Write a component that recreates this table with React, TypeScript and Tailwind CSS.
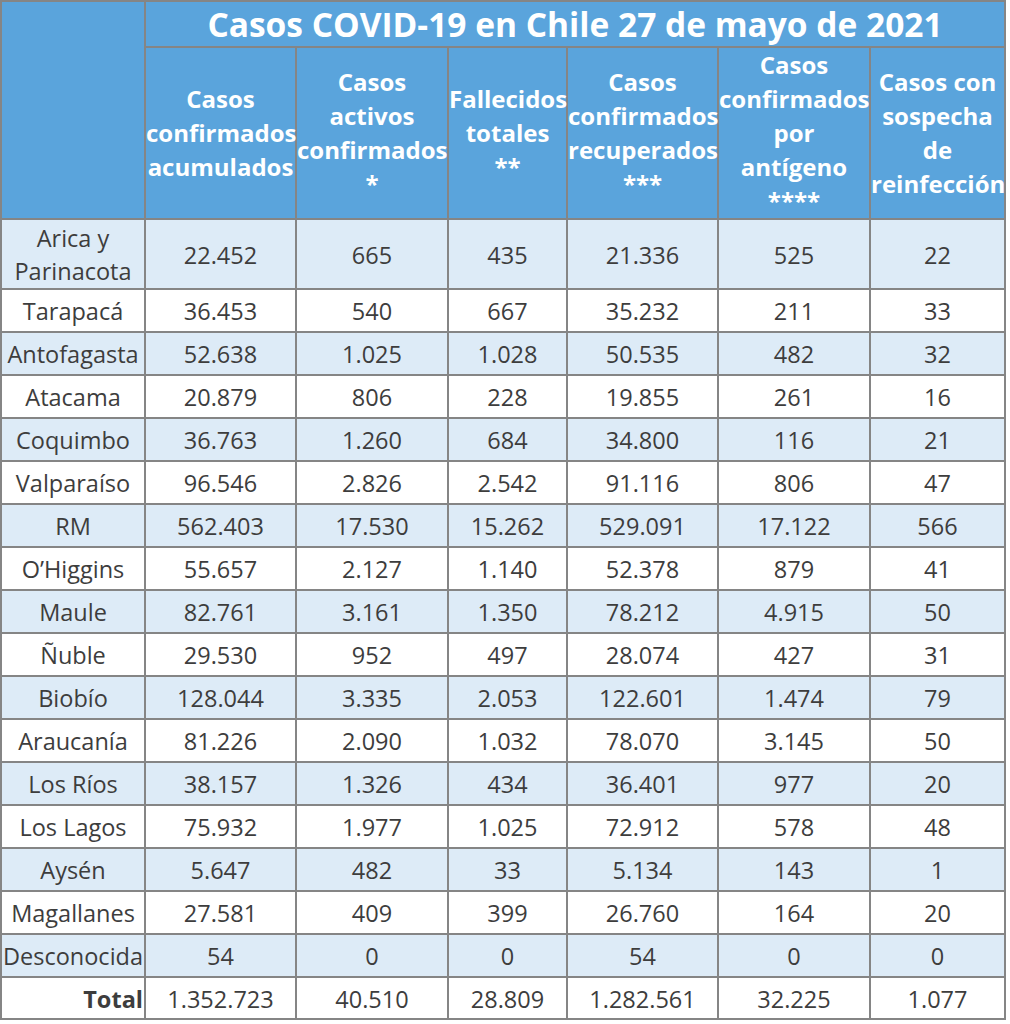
import React from "react";

const headers = [
  ["Casos", "confirmados", "acumulados"],
  ["Casos", "activos", "confirmados", "*"],
  ["Fallecidos", "totales", "**"],
  ["Casos", "confirmados", "recuperados", "***"],
  ["Casos", "confirmados", "por", "antígeno", "****"],
  ["Casos con", "sospecha", "de", "reinfección"],
];

const colWidths = ["w-[144px]", "w-[151px]", "w-[152px]", "w-[119px]", "w-[151px]", "w-[152px]", "w-[135px]"];

const rows: string[][] = [
  ["Arica y\nParinacota", "22.452", "665", "435", "21.336", "525", "22"],
  ["Tarapacá", "36.453", "540", "667", "35.232", "211", "33"],
  ["Antofagasta", "52.638", "1.025", "1.028", "50.535", "482", "32"],
  ["Atacama", "20.879", "806", "228", "19.855", "261", "16"],
  ["Coquimbo", "36.763", "1.260", "684", "34.800", "116", "21"],
  ["Valparaíso", "96.546", "2.826", "2.542", "91.116", "806", "47"],
  ["RM", "562.403", "17.530", "15.262", "529.091", "17.122", "566"],
  ["O’Higgins", "55.657", "2.127", "1.140", "52.378", "879", "41"],
  ["Maule", "82.761", "3.161", "1.350", "78.212", "4.915", "50"],
  ["Ñuble", "29.530", "952", "497", "28.074", "427", "31"],
  ["Biobío", "128.044", "3.335", "2.053", "122.601", "1.474", "79"],
  ["Araucanía", "81.226", "2.090", "1.032", "78.070", "3.145", "50"],
  ["Los Ríos", "38.157", "1.326", "434", "36.401", "977", "20"],
  ["Los Lagos", "75.932", "1.977", "1.025", "72.912", "578", "48"],
  ["Aysén", "5.647", "482", "33", "5.134", "143", "1"],
  ["Magallanes", "27.581", "409", "399", "26.760", "164", "20"],
  ["Desconocida", "54", "0", "0", "54", "0", "0"],
];

const totals = ["1.352.723", "40.510", "28.809", "1.282.561", "32.225", "1.077"];

const cell = "border-r-2 border-b-2 border-[#858585] p-0 text-center align-middle";

export default function App() {
  return (
    <div className="min-h-screen bg-white font-['Open_Sans',sans-serif]">
      <table className="table-fixed border-separate border-spacing-0 border-l-2 border-t-2 border-[#858585] w-[1006px]">
        <colgroup>
          {colWidths.map((w, i) => (
            <col key={i} className={w} />
          ))}
        </colgroup>
        <thead>
          <tr className="h-[46px]">
            <td rowSpan={2} className={`${cell} bg-[#5aa4dc]`}></td>
            <th
              colSpan={6}
              className={`${cell} bg-[#5aa4dc] text-white font-bold text-[33.5px] leading-[44px] whitespace-nowrap`}
            >
              Casos COVID-19 en Chile 27 de mayo de 2021
            </th>
          </tr>
          <tr className="h-[172px]">
            {headers.map((lines, i) => (
              <th
                key={i}
                className={`${cell} bg-[#5aa4dc] text-white font-bold text-[24px] leading-[34px] whitespace-nowrap`}
              >
                {lines.map((l, j) => (
                  <div key={j}>{l}</div>
                ))}
              </th>
            ))}
          </tr>
        </thead>
        <tbody className="text-[#3d3d3d] text-[23.5px] leading-[33px]">
          {rows.map((r, i) => (
            <tr key={i} className={i === 0 ? "h-[70px]" : "h-[43px]"}>
              {r.map((v, j) => (
                <td
                  key={j}
                  className={`${cell} whitespace-pre-line pt-[2px] ${i % 2 === 0 ? "bg-[#ddebf7]" : "bg-white"}`}
                >
                  {v}
                </td>
              ))}
            </tr>
          ))}
          <tr className="h-[42px]">
            <td className={`${cell} text-right font-bold pr-[1px] pt-[2px]`}>Total</td>
            {totals.map((v, j) => (
              <td key={j} className={`${cell} pt-[2px]`}>
                {v}
              </td>
            ))}
          </tr>
        </tbody>
      </table>
    </div>
  );
}
